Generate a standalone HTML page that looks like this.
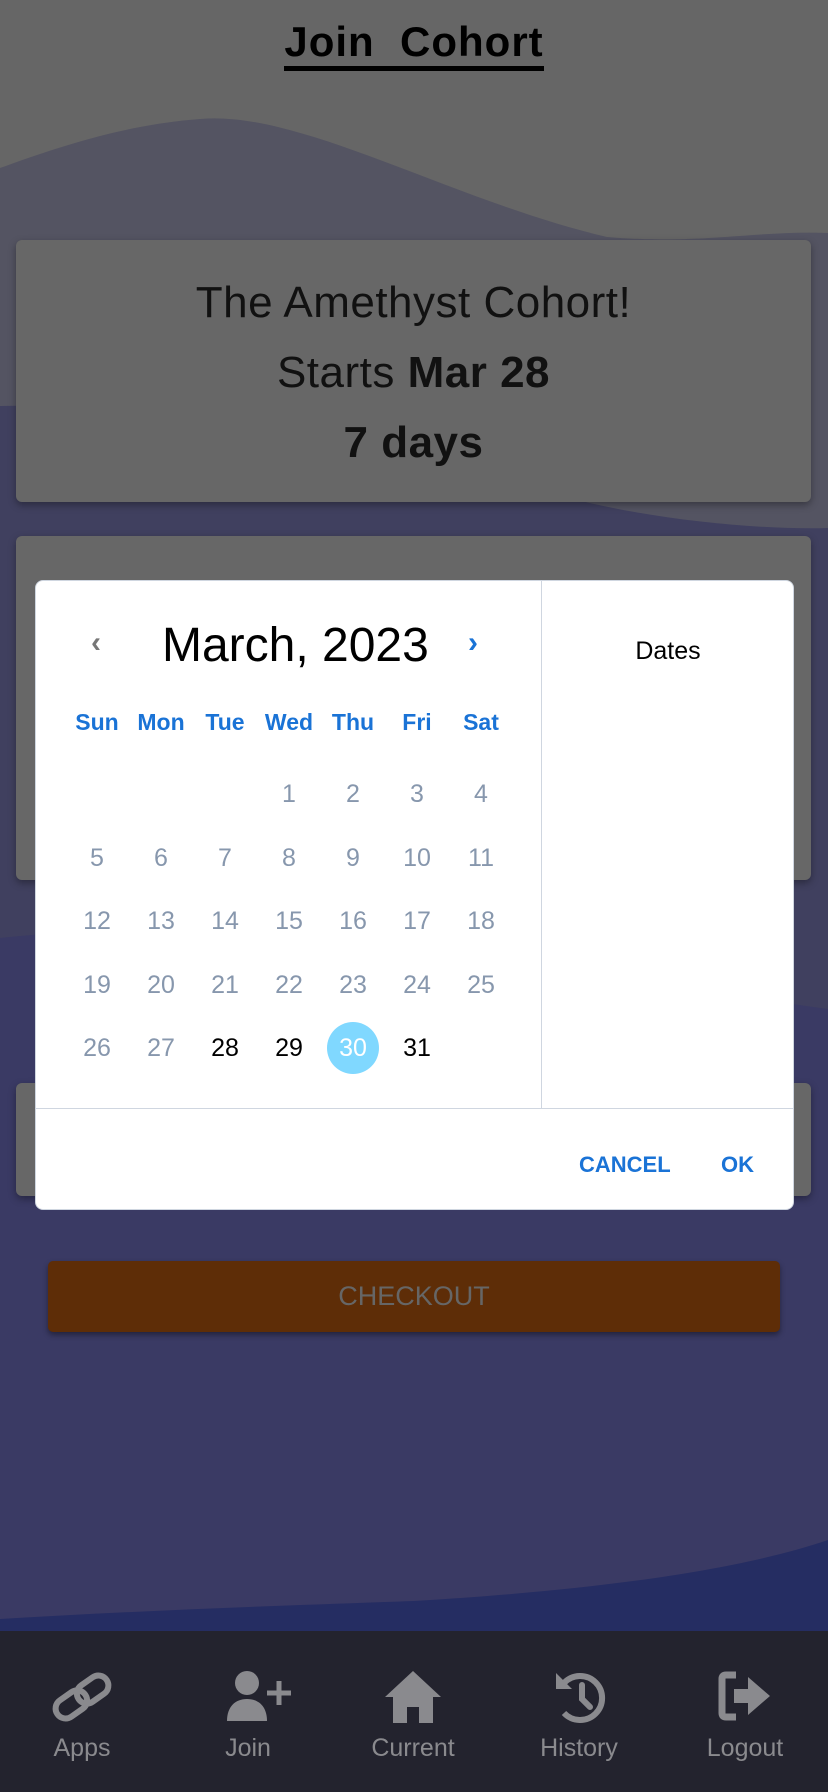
<!DOCTYPE html>
<html><head><meta charset="utf-8">
<style>
*{margin:0;padding:0;box-sizing:border-box}
body{width:828px;height:1792px;overflow:hidden;background:#3a3a64;font-family:"Liberation Sans",sans-serif;position:relative}
.abs{position:absolute}
.card{position:absolute;left:16px;width:795px;background:#676767;border-radius:6px;box-shadow:0 3px 8px rgba(0,0,0,.35)}
.c{text-align:center}
.dlg{position:absolute;left:35px;top:580px;width:759px;height:630px;background:#fff;border-radius:8px;border:1px solid #cfd6e0}
.d{position:absolute;width:50px;margin-left:-25px;text-align:center;font-size:25px;color:#8797ad;line-height:30px}
.w{position:absolute;width:60px;margin-left:-30px;text-align:center;font-size:23px;font-weight:bold;color:#1a73d6}
.nav{position:absolute;left:0;top:1631px;width:828px;height:161px;background:#23232e}
.ni{position:absolute;width:140px;margin-left:-70px;text-align:center;color:#8a8a8e;font-size:25px}
</style></head><body>
<svg class="abs" style="left:0;top:0" width="828" height="1792">
<rect width="828" height="1792" fill="#3a3a64"/>
<path d="M0 0H828V1009C760 1000 700 990 600 975C400 945 150 920 0 938Z" fill="#40405f"/>
<path d="M0 0H828V528C760 530 660 520 581 501C450 470 300 400 0 406Z" fill="#545462"/>
<path d="M0 0H828V233C760 230 700 245 607 237C450 200 300 110 200 119C120 125 50 150 0 168Z" fill="#666"/>
<path d="M0 1650V1619C150 1610 300 1605 414 1601C600 1590 740 1570 828 1540V1650Z" fill="#252d62"/>
</svg>
<div class="abs c" style="left:0;width:828px;top:18px;font-size:42px;font-weight:bold;color:#000;letter-spacing:1px"><span style="border-bottom:5px solid #000;padding-bottom:1px">Join&nbsp; Cohort</span></div>
<div class="card" style="top:240px;height:262px">
<div class="c" style="margin-top:28px;font-size:44px;color:#111;line-height:70px;letter-spacing:0.5px">The Amethyst Cohort!<br>Starts <b>Mar 28</b><br><b>7 days</b></div>
</div>
<div class="card" style="top:536px;height:344px"></div>
<div class="card" style="top:1083px;height:113px"></div>
<div class="abs" style="left:48px;top:1261px;width:732px;height:71px;background:#5e2d07;border-radius:5px;box-shadow:0 3px 6px rgba(0,0,0,.4);color:#666;font-size:27px;text-align:center;line-height:71px">CHECKOUT</div>

<div class="dlg">
<div class="abs" style="left:505px;top:0;width:1px;height:527px;background:#cfd6e0"></div>
<div class="abs" style="left:0;top:527px;width:757px;height:1px;background:#cfd6e0"></div>
<div class="abs" style="left:126px;top:37px;font-size:48px;color:#000">March, 2023</div>
<div class="abs" style="left:55px;top:45px;font-size:30px;color:#777;font-weight:bold">‹</div>
<div class="abs" style="left:432px;top:45px;font-size:30px;color:#1a73d6;font-weight:bold">›</div>
<div class="abs c" style="left:506px;width:252px;top:56px;font-size:25px;color:#000">Dates</div>
<div class="w" style="left:61px;top:128px">Sun</div><div class="w" style="left:125px;top:128px">Mon</div><div class="w" style="left:189px;top:128px">Tue</div><div class="w" style="left:253px;top:128px">Wed</div><div class="w" style="left:317px;top:128px">Thu</div><div class="w" style="left:381px;top:128px">Fri</div><div class="w" style="left:445px;top:128px">Sat</div>
<div class="d" style="left:253px;top:198px">1</div><div class="d" style="left:317px;top:198px">2</div><div class="d" style="left:381px;top:198px">3</div><div class="d" style="left:445px;top:198px">4</div>
<div class="d" style="left:61px;top:262px">5</div><div class="d" style="left:125px;top:262px">6</div><div class="d" style="left:189px;top:262px">7</div><div class="d" style="left:253px;top:262px">8</div><div class="d" style="left:317px;top:262px">9</div><div class="d" style="left:381px;top:262px">10</div><div class="d" style="left:445px;top:262px">11</div>
<div class="d" style="left:61px;top:325px">12</div><div class="d" style="left:125px;top:325px">13</div><div class="d" style="left:189px;top:325px">14</div><div class="d" style="left:253px;top:325px">15</div><div class="d" style="left:317px;top:325px">16</div><div class="d" style="left:381px;top:325px">17</div><div class="d" style="left:445px;top:325px">18</div>
<div class="d" style="left:61px;top:389px">19</div><div class="d" style="left:125px;top:389px">20</div><div class="d" style="left:189px;top:389px">21</div><div class="d" style="left:253px;top:389px">22</div><div class="d" style="left:317px;top:389px">23</div><div class="d" style="left:381px;top:389px">24</div><div class="d" style="left:445px;top:389px">25</div>
<div class="d" style="left:61px;top:452px">26</div><div class="d" style="left:125px;top:452px">27</div><div class="d" style="left:189px;top:452px;color:#000">28</div><div class="d" style="left:253px;top:452px;color:#000">29</div>
<div class="abs" style="left:291px;top:441px;width:52px;height:52px;border-radius:50%;background:#80d8ff"></div>
<div class="d" style="left:317px;top:452px;color:#fff">30</div><div class="d" style="left:381px;top:452px;color:#000">31</div>
<div class="abs" style="left:543px;top:571px;font-size:22px;font-weight:bold;color:#1a73d6">CANCEL</div>
<div class="abs" style="left:685px;top:571px;font-size:22px;font-weight:bold;color:#1a73d6">OK</div>
</div>

<div class="nav">
<svg class="abs" style="left:48px;top:36px" width="68" height="60" viewBox="0 0 68 60"><g fill="none" stroke="#8a8a8e" stroke-width="6" transform="rotate(-35 34 30)"><rect x="4" y="20" width="34" height="20" rx="10"/><rect x="30" y="20" width="34" height="20" rx="10"/></g></svg>
<svg class="abs" style="left:225px;top:38px" width="66" height="54" viewBox="0 0 66 54"><circle cx="22" cy="14" r="12" fill="#8a8a8e"/><path d="M2 52 C2 38 10 30 22 30 C34 30 42 38 42 52Z" fill="#8a8a8e"/><path d="M54 12V36M42 24H66" stroke="#8a8a8e" stroke-width="5"/></svg>
<svg class="abs" style="left:383px;top:38px" width="60" height="54" viewBox="0 0 60 54"><path d="M30 2 L58 28 H50 V54 H36 V38 H24 V54 H10 V28 H2Z" fill="#8a8a8e"/></svg>
<svg class="abs" style="left:552px;top:38px" width="56" height="56" viewBox="0 0 56 56"><path d="M12 14 A22 22 0 1 1 12 44" fill="none" stroke="#8a8a8e" stroke-width="6"/><path d="M4 4 V20 H20Z" fill="#8a8a8e"/><path d="M30 16 V30 L38 38" fill="none" stroke="#8a8a8e" stroke-width="6" stroke-linecap="round"/></svg>
<svg class="abs" style="left:718px;top:40px" width="56" height="50" viewBox="0 0 56 50"><path d="M18 4 H8 Q4 4 4 8 V42 Q4 46 8 46 H18" fill="none" stroke="#8a8a8e" stroke-width="7"/><path d="M16 18 H30 V6 L52 25 L30 44 V32 H16Z" fill="#8a8a8e"/></svg>
<div class="ni" style="left:82px;top:103px">Apps</div>
<div class="ni" style="left:248px;top:103px">Join</div>
<div class="ni" style="left:413px;top:103px">Current</div>
<div class="ni" style="left:579px;top:103px">History</div>
<div class="ni" style="left:745px;top:103px">Logout</div>
</div>
</body></html>
